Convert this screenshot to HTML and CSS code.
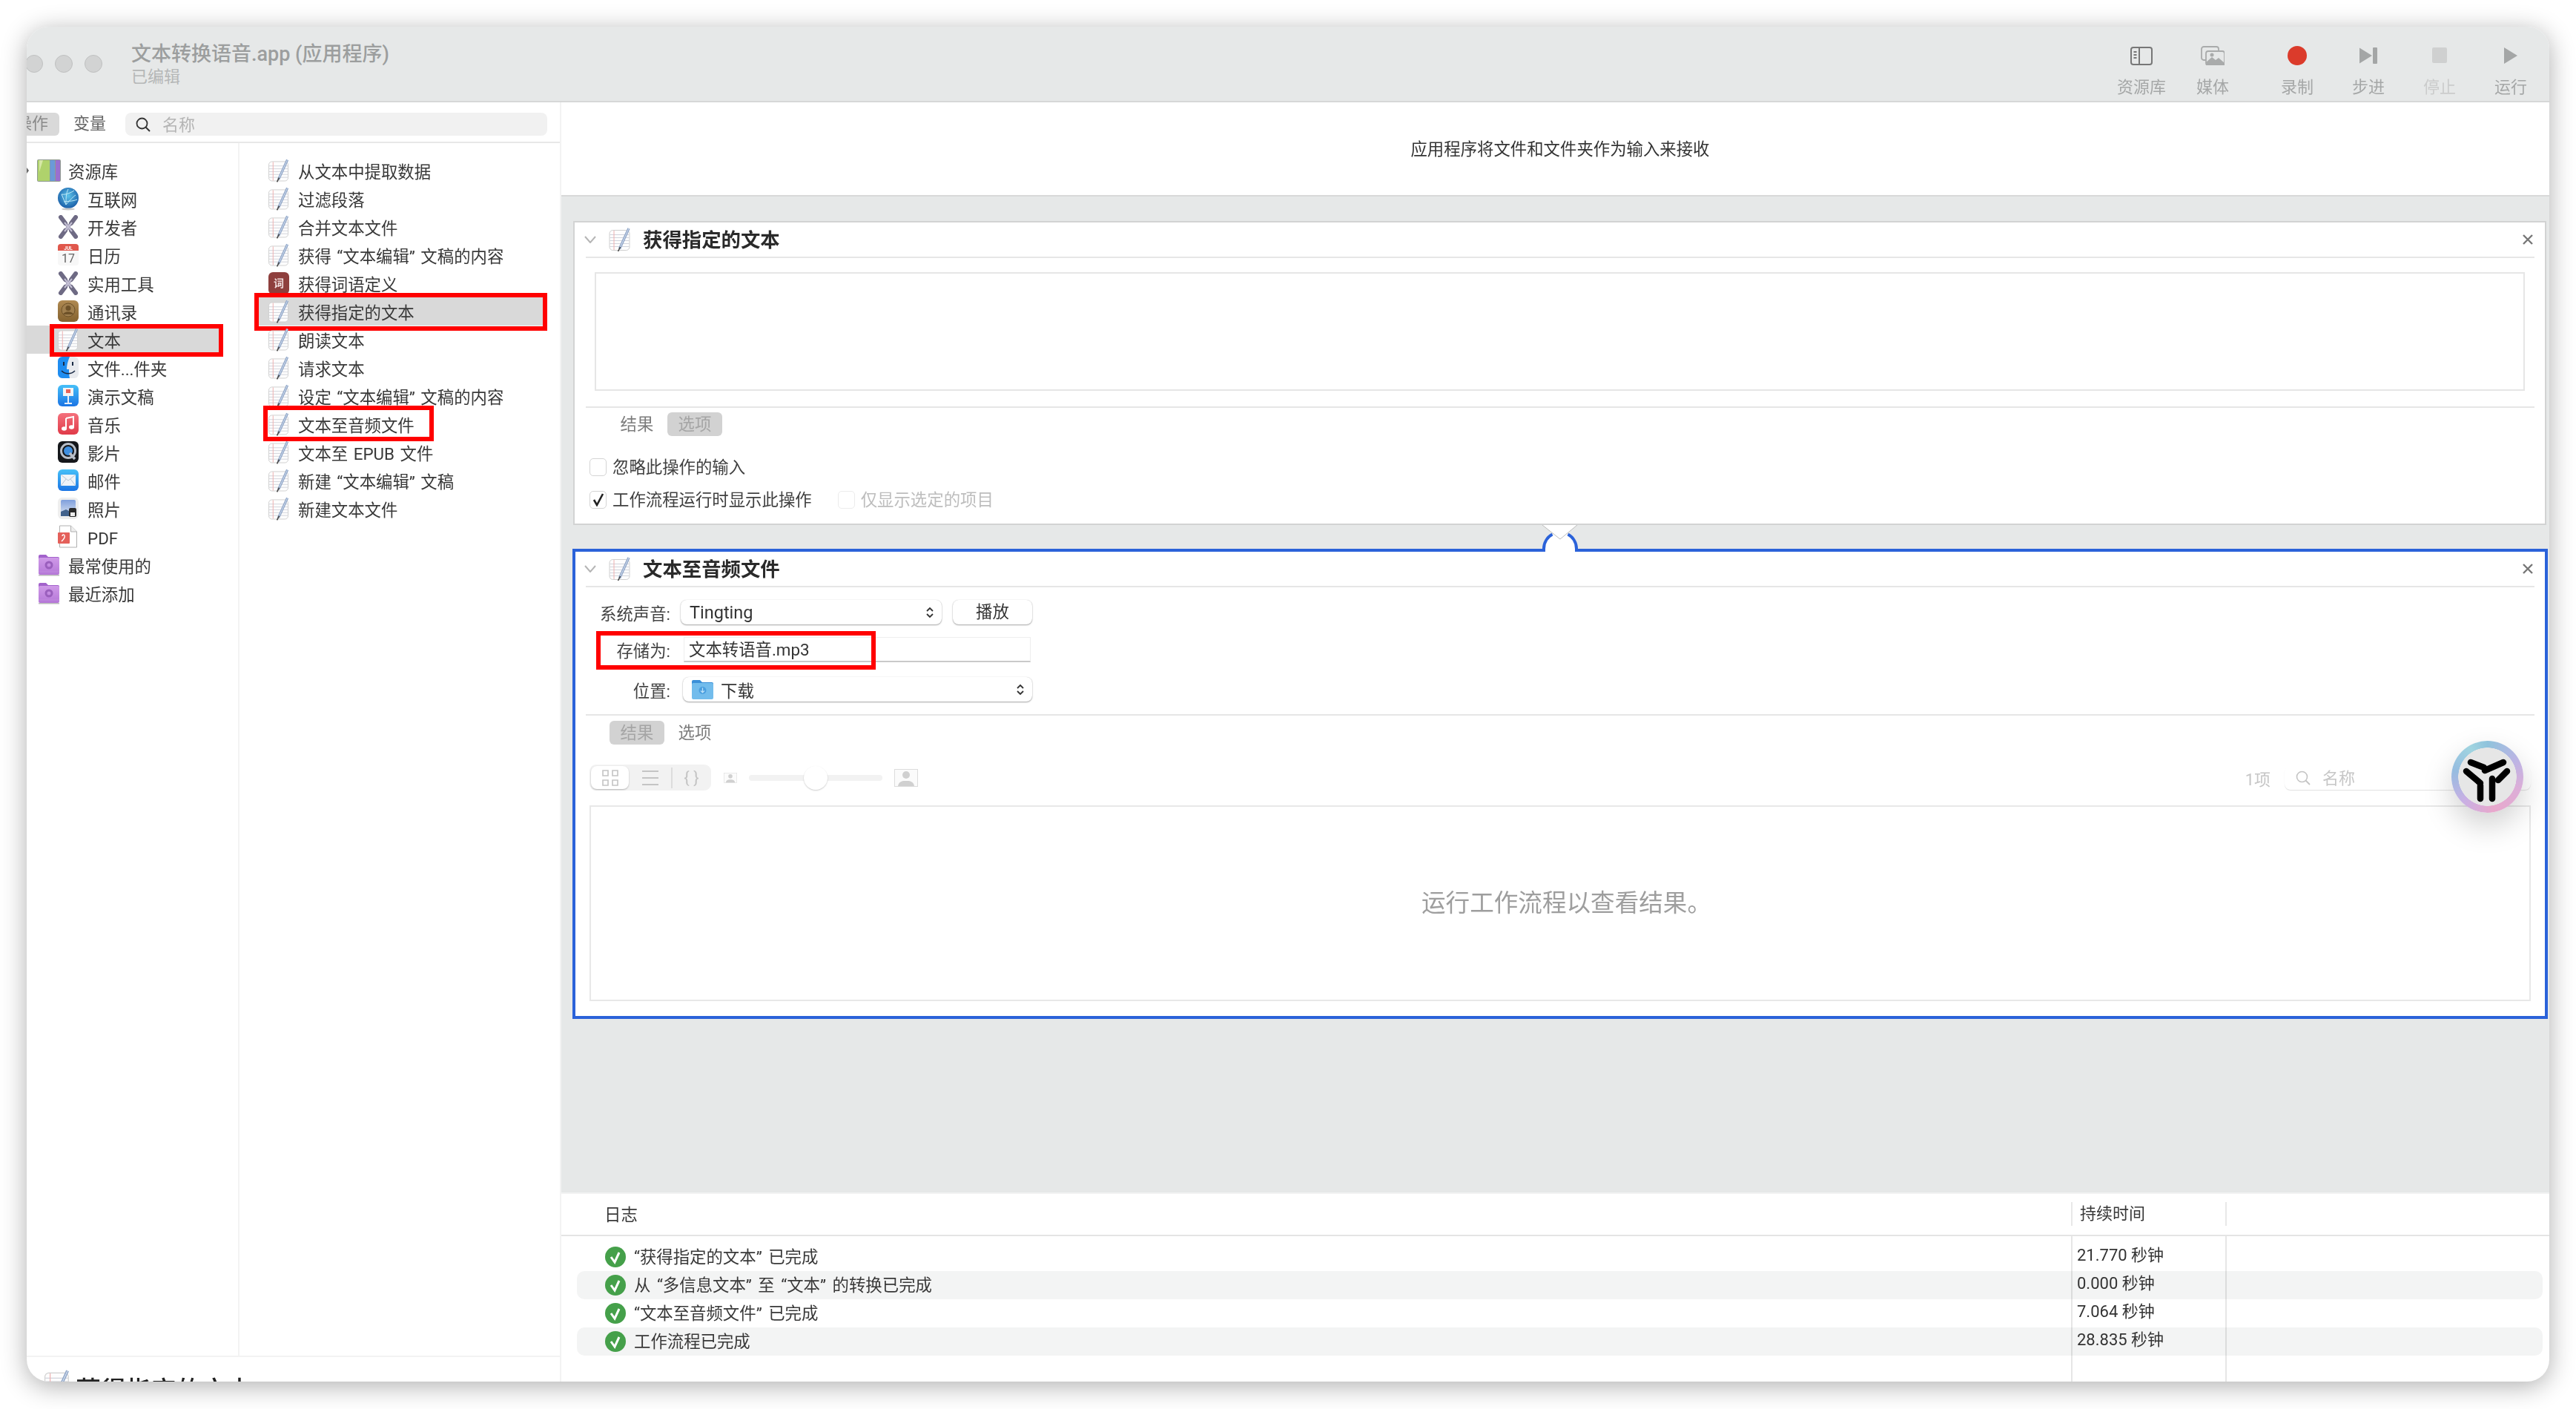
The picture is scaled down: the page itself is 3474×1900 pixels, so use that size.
FILE: index.html
```html
<!DOCTYPE html>
<html lang="zh-CN">
<head>
  <meta charset="UTF-8" />
  <title>文本转换语音.app</title>
  <link rel="stylesheet" href="styles.css">
</head>
<body>
  <svg class="defs" xmlns="http://www.w3.org/2000/svg">
    <defs>
      <radialGradient id="globeFill" cx="50%" cy="40%" r="60%"><stop offset="0" stop-color="#5cc3ea"/><stop offset="1" stop-color="#1a5ea8"/></radialGradient>
      <linearGradient id="redFill" x1="0" y1="0" x2="0" y2="1"><stop offset="0" stop-color="#f4707c"/><stop offset="1" stop-color="#e03a48"/></linearGradient>
      <linearGradient id="blueFill" x1="0" y1="0" x2="0" y2="1"><stop offset="0" stop-color="#46c0f8"/><stop offset="1" stop-color="#1b74e4"/></linearGradient>
      <linearGradient id="purpleFill" x1="0" y1="0" x2="0" y2="1"><stop offset="0" stop-color="#cf9ae8"/><stop offset="1" stop-color="#b577d8"/></linearGradient>
      <linearGradient id="photoFill" x1="0" y1="0" x2="0" y2="1"><stop offset="0" stop-color="#7f9fdc"/><stop offset="1" stop-color="#dfe7f2"/></linearGradient>
      <linearGradient id="brownFill" x1="0" y1="0" x2="0" y2="1"><stop offset="0" stop-color="#b08a52"/><stop offset="1" stop-color="#84622f"/></linearGradient>
      <symbol id="i-note" viewBox="0 0 29 32">
        <rect x="0.5" y="3.5" width="27" height="27" rx="4.5" fill="#fdfdfd" stroke="#cfcfcf"/>
        <path d="M1 9.5h26M1 13.5h26M1 17.5h26M1 21.5h26M1 25.5h26" stroke="#d2d4dc" stroke-width="1"/>
        <path d="M6.5 4v26" stroke="#eeb0b0" stroke-width="1"/>
        <path d="M26.5 1L14 28.5" stroke="#8ea4c6" stroke-width="3.4"/>
        <path d="M26.5 1L14 28.5" stroke="#d6e2f2" stroke-width="1"/>
        <path d="M15 26l-3 6" stroke="#444" stroke-width="1.6"/>
      </symbol>
      <symbol id="i-books" viewBox="0 0 32 32">
        <rect x="0" y="1" width="32" height="30" rx="2" fill="#8f9a8f"/>
        <rect x="1" y="2" width="16" height="28" fill="#afd26c"/>
        <rect x="17.500" y="2" width="6.500" height="28" fill="#6b9ad8"/>
        <rect x="25" y="2" width="6" height="28" fill="#9a6fd0"/>
        <path d="M3 2h5L3 18z" fill="#d6e8a6"/>
      </symbol>
      <symbol id="i-globe" viewBox="0 0 28 32">
        <circle cx="14" cy="15" r="14" fill="url(#globeFill)"/>
        <path d="M5 10c6 1 12-2 17-5M5 10l6 14M11 24c5-6 10-11 13-13M14 3c-3 6-3 12-3 21M8 20c5-1 11 0 18-3" stroke="#bfeaf8" stroke-width="1" fill="none"/>
        <ellipse cx="14" cy="30" rx="9" ry="1.500" fill="#c8c8c8"/>
      </symbol>
      <symbol id="i-tools" viewBox="0 0 28 32">
        <path d="M4 3l20 26M24 3L4 29" stroke="#9c98b4" stroke-width="4"/>
        <path d="M4 3l6 8M24 3l-6 8M4 29l6-8M24 29l-6-8" stroke="#6e6a84" stroke-width="6" stroke-linecap="round"/>
        <path d="M9 10l10 12M19 10L9 22" stroke="#c4c0d4" stroke-width="2"/>
      </symbol>
      <symbol id="i-cal" viewBox="0 0 28 32">
        <rect x="0" y="1" width="28" height="29" rx="4" fill="#f7f7f7"/>
        <path d="M0 10V5a4 4 0 0 1 4-4h20a4 4 0 0 1 4 4v5z" fill="#e0574c"/>
        <text x="14" y="8.500" text-anchor="middle" font-family="Roboto" font-size="6.500" font-weight="700" fill="#fff">JUL</text>
        <text x="14" y="26" text-anchor="middle" font-family="Roboto" font-size="16" fill="#666">17</text>
      </symbol>
      <symbol id="i-contacts" viewBox="0 0 28 32">
        <rect x="0" y="1" width="28" height="29" rx="6" fill="url(#brownFill)"/>
        <circle cx="14" cy="14" r="9" fill="#a07f4e" stroke="#6d5128"/>
        <circle cx="14" cy="11.500" r="3.500" fill="#6d5128"/>
        <path d="M7 20c2-5 12-5 14 0z" fill="#6d5128"/>
      </symbol>
      <symbol id="i-finder" viewBox="0 0 28 32">
        <rect x="0" y="1" width="28" height="29" rx="6" fill="#e8eaee"/>
        <path d="M6 1h10c-3 7-4 12-4 17h3c0 4 0 8 1 12H6a6 6 0 0 1-6-6V7a6 6 0 0 1 6-6z" fill="#1f8df0"/>
        <path d="M8 8v5M20 8v5" stroke="#1a2a44" stroke-width="2"/>
        <path d="M5 20c5 5 13 5 18 0" stroke="#1a2a44" stroke-width="1.600" fill="none"/>
      </symbol>
      <symbol id="i-keynote" viewBox="0 0 28 32">
        <rect x="0" y="1" width="28" height="29" rx="6" fill="url(#blueFill)"/>
        <rect x="7" y="5" width="14" height="11" fill="#f4f4f4"/>
        <rect x="11" y="7" width="6" height="5" fill="#e8635a"/>
        <path d="M14 16v10M9 26h10" stroke="#e8eef8" stroke-width="2"/>
      </symbol>
      <symbol id="i-music" viewBox="0 0 28 32">
        <rect x="0" y="1" width="28" height="29" rx="6" fill="url(#redFill)"/>
        <path d="M11 8l10-2v14M11 8v14" stroke="#fff" stroke-width="2" fill="none"/>
        <ellipse cx="8.500" cy="22" rx="3.500" ry="2.800" fill="#fff"/>
        <ellipse cx="18.500" cy="20" rx="3.500" ry="2.800" fill="#fff"/>
      </symbol>
      <symbol id="i-quick" viewBox="0 0 28 32">
        <rect x="0" y="1" width="28" height="29" rx="6" fill="#15171b"/>
        <circle cx="14" cy="14" r="9.500" fill="none" stroke="#b8bec8" stroke-width="3"/>
        <circle cx="14" cy="14" r="6" fill="#3f8fe0"/>
        <path d="M16 17l7 8" stroke="#b8bec8" stroke-width="3.500"/>
      </symbol>
      <symbol id="i-mail" viewBox="0 0 28 32">
        <rect x="0" y="1" width="28" height="29" rx="6" fill="url(#blueFill)"/>
        <rect x="4" y="8" width="20" height="15" fill="#eef3f8"/>
        <path d="M4 8l10 8 10-8M4 23l7-9M24 23l-7-9" stroke="#b5c4d4" fill="none"/>
      </symbol>
      <symbol id="i-photos" viewBox="0 0 28 32">
        <rect x="0" y="1" width="28" height="29" rx="6" fill="#eeeeee"/>
        <rect x="4" y="4" width="20" height="22" rx="2" fill="url(#photoFill)"/>
        <path d="M4 20l7-3 6 3v6H4z" fill="#41628c"/>
        <rect x="15" y="15" width="10" height="12" rx="2" fill="#2a2a2a"/>
        <rect x="17" y="21" width="6" height="5" fill="#eee"/>
      </symbol>
      <symbol id="i-pdf" viewBox="0 0 28 32">
        <path d="M2.500 1h15l8 8v21h-23z" fill="#fff" stroke="#b0b0b0"/>
        <path d="M17.500 1v8h8" fill="#eee" stroke="#b0b0b0"/>
        <rect x="0" y="10" width="16" height="15" rx="1" fill="#e4605a"/>
        <path d="M5 22c3-3 5-6 4-8s-3-1-3 1" stroke="#fff" stroke-width="1.400" fill="none"/>
      </symbol>
      <symbol id="i-folder" viewBox="0 0 28 32">
        <path d="M0 4a2 2 0 0 1 2-2h8l3 3h13a2 2 0 0 1 2 2v4H0z" fill="#a262cb"/>
        <rect x="0" y="6" width="28" height="23" rx="2" fill="url(#purpleFill)"/>
        <rect x="0" y="29" width="28" height="1.500" fill="#b9b9b9"/>
        <circle cx="14" cy="16" r="4" fill="none" stroke="#9a5fbd" stroke-width="3"/>
        <path d="M0 25h28" stroke="#c08ddc"/>
      </symbol>
      <symbol id="i-check" viewBox="0 0 28 28">
        <circle cx="14" cy="14" r="14" fill="#45a04a"/>
        <path d="M8 14l5 7 6-13" fill="none" stroke="#fff" stroke-width="3"/>
      </symbol>
      <symbol id="i-user" viewBox="0 0 32 24">
        <rect x="0.500" y="0.500" width="31" height="23" fill="#fbfbfb" stroke="#dcdcdc"/>
        <circle cx="16" cy="8" r="5" fill="#d0d0d0"/>
        <path d="M5 23c1-7 7-7 11-7s10 0 11 7z" fill="#d0d0d0"/>
      </symbol>
    </defs>
  </svg>

  <div class="window">
    <header class="titlebar">
      <div class="lights"><i></i><i></i><i></i></div>
      <div class="doc-title">
        <div class="doc-name">文本转换语音.app (应用程序)</div>
        <div class="doc-state">已编辑</div>
      </div>
      <div class="tools">
        <div class="tool">
          <svg width="30" height="26" viewBox="0 0 30 26"><rect x="1" y="2" width="28" height="23" rx="3" fill="none" stroke="#777" stroke-width="2"/><path d="M12 2v23" stroke="#777" stroke-width="2"/><path d="M4.500 8h4M4.500 12h4M4.500 16h4" stroke="#777" stroke-width="1.800"/></svg>
          <span>资源库</span>
        </div>
        <div class="tool">
          <svg width="32" height="26" viewBox="0 0 32 26"><rect x="1" y="1" width="23" height="18" rx="3" fill="none" stroke="#a9abab" stroke-width="1.800"/><rect x="7" y="7" width="25" height="19" rx="3" fill="#e6e8e8" stroke="#a9abab" stroke-width="1.800"/><path d="M7 26v-4l8-7 5 4 4-3 8 7v3z" fill="#a9abab"/><circle cx="15" cy="12" r="2.500" fill="#a9abab"/></svg>
          <span>媒体</span>
        </div>
        <div class="tool tool-record">
          <svg width="26" height="26" viewBox="0 0 26 26"><circle cx="13" cy="13" r="13" fill="#db3b2b"/></svg>
          <span>录制</span>
        </div>
        <div class="tool">
          <svg width="24" height="26" viewBox="0 0 24 26"><path d="M0 2.500L17 13 0 23.500z" fill="#a4a6a6"/><rect x="18" y="2" width="6" height="22" rx="1" fill="#a4a6a6"/></svg>
          <span>步进</span>
        </div>
        <div class="tool tool-off">
          <svg width="20" height="26" viewBox="0 0 20 26"><rect x="0" y="2" width="20" height="21" rx="2" fill="#cfd0d0"/></svg>
          <span>停止</span>
        </div>
        <div class="tool">
          <svg width="20" height="26" viewBox="0 0 20 26"><path d="M1 2l18 11L1 24z" fill="#a4a6a6"/></svg>
          <span>运行</span>
        </div>
      </div>
    </header>

    <div class="main">
      <aside class="library">
        <div class="lib-tabs">
          <div class="lib-tab lib-tab-on">操作</div>
          <div class="lib-tab">变量</div>
          <div class="search lib-search">
            <svg width="20" height="20" viewBox="0 0 20 20"><circle cx="8.500" cy="8.500" r="7" fill="none" stroke="#333" stroke-width="1.800"/><path d="M13.500 13.500L19 19" stroke="#333" stroke-width="2"/></svg>
            <span>名称</span>
          </div>
        </div>

        <div class="lib-columns">
          <div class="cats">
            <div class="row top"><svg class="ico-wide"><use href="#i-books"/></svg><span>资源库</span></div>
            <div class="row"><svg class="ico"><use href="#i-globe"/></svg><span>互联网</span></div>
            <div class="row"><svg class="ico"><use href="#i-tools"/></svg><span>开发者</span></div>
            <div class="row"><svg class="ico"><use href="#i-cal"/></svg><span>日历</span></div>
            <div class="row"><svg class="ico"><use href="#i-tools"/></svg><span>实用工具</span></div>
            <div class="row"><svg class="ico"><use href="#i-contacts"/></svg><span>通讯录</span></div>
            <div class="row on mark-cat"><svg class="ico"><use href="#i-note"/></svg><span>文本</span></div>
            <div class="row"><svg class="ico"><use href="#i-finder"/></svg><span>文件...件夹</span></div>
            <div class="row"><svg class="ico"><use href="#i-keynote"/></svg><span>演示文稿</span></div>
            <div class="row"><svg class="ico"><use href="#i-music"/></svg><span>音乐</span></div>
            <div class="row"><svg class="ico"><use href="#i-quick"/></svg><span>影片</span></div>
            <div class="row"><svg class="ico"><use href="#i-mail"/></svg><span>邮件</span></div>
            <div class="row"><svg class="ico"><use href="#i-photos"/></svg><span>照片</span></div>
            <div class="row"><svg class="ico"><use href="#i-pdf"/></svg><span>PDF</span></div>
            <div class="row top"><svg class="ico-wide"><use href="#i-folder"/></svg><span>最常使用的</span></div>
            <div class="row top"><svg class="ico-wide"><use href="#i-folder"/></svg><span>最近添加</span></div>
          </div>
          <div class="actions">
            <div class="row"><svg class="ico"><use href="#i-note"/></svg><span>从文本中提取数据</span></div>
            <div class="row"><svg class="ico"><use href="#i-note"/></svg><span>过滤段落</span></div>
            <div class="row"><svg class="ico"><use href="#i-note"/></svg><span>合并文本文件</span></div>
            <div class="row"><svg class="ico"><use href="#i-note"/></svg><span>获得 “文本编辑” 文稿的内容</span></div>
            <div class="row"><div class="ico dict">词</div><span>获得词语定义</span></div>
            <div class="row on mark-action"><svg class="ico"><use href="#i-note"/></svg><span>获得指定的文本</span></div>
            <div class="row"><svg class="ico"><use href="#i-note"/></svg><span>朗读文本</span></div>
            <div class="row"><svg class="ico"><use href="#i-note"/></svg><span>请求文本</span></div>
            <div class="row"><svg class="ico"><use href="#i-note"/></svg><span>设定 “文本编辑” 文稿的内容</span></div>
            <div class="row mark-audio"><svg class="ico"><use href="#i-note"/></svg><span>文本至音频文件</span></div>
            <div class="row"><svg class="ico"><use href="#i-note"/></svg><span>文本至 EPUB 文件</span></div>
            <div class="row"><svg class="ico"><use href="#i-note"/></svg><span>新建 “文本编辑” 文稿</span></div>
            <div class="row"><svg class="ico"><use href="#i-note"/></svg><span>新建文本文件</span></div>
          </div>
        </div>

        <div class="lib-desc">
          <svg class="desc-ico"><use href="#i-note"/></svg>
          <span>获得指定的文本</span>
        </div>
      </aside>

      <section class="workspace">
        <div class="input-note">应用程序将文件和文件夹作为输入来接收</div>

        <div class="flow">
          <div class="card">
            <div class="card-head">
              <svg class="chevron" width="16" height="10" viewBox="0 0 16 10"><path d="M1 1l7 8 7-8" fill="none" stroke="#b5b5b5" stroke-width="2"/></svg>
              <svg class="head-ico"><use href="#i-note"/></svg>
              <div class="card-title">获得指定的文本</div>
              <svg class="close" width="14" height="14" viewBox="0 0 14 14"><path d="M1 1l12 12M13 1L1 13" stroke="#777" stroke-width="2.400"/></svg>
            </div>
            <div class="text-box"></div>
            <div class="card-tabs">
              <div class="card-tab">结果</div>
              <div class="card-tab card-tab-on">选项</div>
            </div>
            <label class="opt opt-first"><i class="box"></i><span>忽略此操作的输入</span></label>
            <div class="opt-row">
              <label class="opt"><i class="box box-on"><svg width="16" height="18" viewBox="0 0 16 18"><path d="M2 9l4 7 8-15" fill="none" stroke="#222" stroke-width="2.600"/></svg></i><span>工作流程运行时显示此操作</span></label>
              <label class="opt opt-off"><i class="box"></i><span>仅显示选定的项目</span></label>
            </div>
          </div>

          <div class="card card-active">
            <svg class="notch" width="48" height="36" viewBox="0 0 48 36">
              <circle cx="24" cy="32" r="22" fill="#fff"/>
              <rect x="4" y="30" width="40" height="6" fill="#fff"/>
              <path d="M0 0L24 19 47 0z" fill="#fff"/>
              <path d="M0 0L24 19 47 0" fill="none" stroke="#bcbcbc" stroke-width="1"/>
              <path d="M2 36V32A22 22 0 0 1 13.500 12.600M34.500 12.600A22 22 0 0 1 46 32V36" fill="none" stroke="#2b62d9" stroke-width="4"/>
            </svg>
            <div class="card-head">
              <svg class="chevron" width="16" height="10" viewBox="0 0 16 10"><path d="M1 1l7 8 7-8" fill="none" stroke="#b5b5b5" stroke-width="2"/></svg>
              <svg class="head-ico"><use href="#i-note"/></svg>
              <div class="card-title">文本至音频文件</div>
              <svg class="close" width="14" height="14" viewBox="0 0 14 14"><path d="M1 1l12 12M13 1L1 13" stroke="#777" stroke-width="2.400"/></svg>
            </div>

            <div class="form">
              <div class="form-row">
                <div class="form-label">系统声音:</div>
                <div class="select voice">Tingting
                  <svg class="updown" width="10" height="16" viewBox="0 0 10 16"><path d="M1 6l4-4 4 4M1 10l4 4 4-4" fill="none" stroke="#333" stroke-width="1.800"/></svg>
                </div>
                <div class="btn">播放</div>
              </div>
              <div class="form-row form-save">
                <div class="form-label">存储为:</div>
                <div class="field">文本转语音.mp3</div>
              </div>
              <div class="form-row form-place">
                <div class="form-label">位置:</div>
                <div class="select place">
                  <svg width="29" height="28" viewBox="0 0 29 28"><path d="M0 3a2 2 0 0 1 2-2h9l3 3h13a2 2 0 0 1 2 2v4H0z" fill="#3a8fd8"/><rect x="0" y="5" width="29" height="22" rx="2" fill="#72bcec"/><circle cx="14.500" cy="15" r="5" fill="#4a9fdf"/><path d="M14.500 11.500v6M12 15.500l2.500 2.500 2.500-2.500" fill="none" stroke="#bfe2f8" stroke-width="1.200"/></svg>
                  <span>下载</span>
                  <svg class="updown" width="10" height="16" viewBox="0 0 10 16"><path d="M1 6l4-4 4 4M1 10l4 4 4-4" fill="none" stroke="#333" stroke-width="1.800"/></svg>
                </div>
              </div>
            </div>

            <div class="card-tabs card-tabs-result">
              <div class="card-tab card-tab-on">结果</div>
              <div class="card-tab">选项</div>
            </div>

            <div class="result-bar">
              <div class="segments">
                <div class="seg seg-on"><svg width="24" height="24" viewBox="0 0 24 24"><path d="M2 2h7v7H2zM15 2h7v7h-7zM2 15h7v7H2zM15 15h7v7h-7z" fill="none" stroke="#c4c4c4" stroke-width="1.600"/></svg></div>
                <div class="seg seg-list"><svg width="24" height="24" viewBox="0 0 24 24"><path d="M1 3h22M1 12h22M1 21h22" stroke="#c4c4c4" stroke-width="2"/></svg></div>
                <i class="seg-line"></i>
                <div class="seg seg-code">{ }</div>
              </div>
              <svg class="user-small"><use href="#i-user"/></svg>
              <div class="slider"><i></i></div>
              <svg class="user-big"><use href="#i-user"/></svg>
              <div class="count">1项</div>
              <div class="search result-search">
                <svg width="20" height="20" viewBox="0 0 20 20"><circle cx="8.500" cy="8.500" r="7" fill="none" stroke="#c4c4c4" stroke-width="1.600"/><path d="M13.500 13.500L19 19" stroke="#c4c4c4" stroke-width="1.800"/></svg>
                <span>名称</span>
              </div>
            </div>

            <div class="result-box">运行工作流程以查看结果。</div>

            <div class="badge">
              <svg width="75" height="75" viewBox="11 11 75 75"><path d="M26 29l18 7M45 40l25-11M20 41l19 16M63 53l12-12M39 60v18M55 51v27" fill="none" stroke="#000" stroke-width="8.500" stroke-linecap="round"/></svg>
            </div>
          </div>
        </div>

        <div class="log">
          <div class="log-head">
            <div class="log-name">日志</div>
            <div class="log-time">持续时间</div>
            <div class="log-rest"></div>
          </div>
          <div class="log-body">
            <div class="log-row"><div class="log-msg"><svg width="28" height="28"><use href="#i-check"/></svg><span>“获得指定的文本” 已完成</span></div><div class="log-dur">21.770 秒钟</div></div>
            <div class="log-row"><div class="log-msg"><svg width="28" height="28"><use href="#i-check"/></svg><span>从 “多信息文本” 至 “文本” 的转换已完成</span></div><div class="log-dur">0.000 秒钟</div></div>
            <div class="log-row"><div class="log-msg"><svg width="28" height="28"><use href="#i-check"/></svg><span>“文本至音频文件” 已完成</span></div><div class="log-dur">7.064 秒钟</div></div>
            <div class="log-row"><div class="log-msg"><svg width="28" height="28"><use href="#i-check"/></svg><span>工作流程已完成</span></div><div class="log-dur">28.835 秒钟</div></div>
          </div>
        </div>
      </section>
    </div>
  </div>
</body>
</html>
```

FILE: styles.css
```css
*, *::before, *::after {
  box-sizing: border-box;
}
html, body {
  margin: 0;
  height: 100%;
}
body {
  background: #fff;
  font-family: Roboto, "Noto Sans CJK SC", sans-serif;
  font-size: 22.4px;
  color: #383838;
  overflow: hidden;
  padding: 36px 36px 37px 36px;
}
.defs {
  display: block;
  width: 0;
  height: 0;
}
.window {
  display: flex;
  flex-direction: column;
  height: 100%;
  background: #fff;
  border-radius: 30px;
  overflow: hidden;
  box-shadow: 0 6px 34px rgba(0, 0, 0, 0.32);
  filter: blur(0.4px);
}

/* title bar */
.titlebar {
  display: flex;
  flex: none;
  height: 102px;
  background: #e6e8e8;
  border-bottom: 2px solid #d6d7d7;
}
.lights {
  display: flex;
  gap: 16px;
  margin: 38px 39px 0 -2px;
}
.lights i {
  width: 24px;
  height: 24px;
  border-radius: 50%;
  background: #d2d3d3;
  border: 1px solid #bfc0c0;
}
.doc-title {
  margin-top: 22px;
}
.doc-name {
  font-size: 27px;
  line-height: 30px;
  font-weight: 500;
  color: #9c9e9e;
}
.doc-state {
  margin-top: 2px;
  line-height: 28px;
  font-size: 22px;
  color: #b5b7b7;
}
.tools {
  display: flex;
  margin-left: auto;
  padding-right: 4px;
}
.tool {
  width: 96px;
  padding-top: 26px;
  display: flex;
  flex-direction: column;
  align-items: center;
  font-size: 22px;
  color: #a5a7a7;
}
.tool svg {
  height: 26px;
  flex: none;
}
.tool span {
  line-height: 30px;
  margin-top: 15px;
}
.tool-record {
  margin-left: 18px;
}
.tool-off {
  color: #cbcccc;
}

/* library */
.main {
  display: flex;
  flex: 1;
  min-height: 0;
}
.library {
  display: flex;
  flex-direction: column;
  flex: none;
  width: 721px;
  border-right: 2px solid #f3f3f3;
}
.lib-tabs {
  display: flex;
  flex: none;
  height: 55px;
  padding-top: 14px;
  margin-left: -30px;
  gap: 4px;
  border-bottom: 2px solid #e8e8e8;
}
.lib-tab {
  width: 74px;
  height: 31px;
  line-height: 29px;
  text-align: center;
  border-radius: 6px;
  font-size: 22px;
  color: #666;
}
.lib-tab-on {
  background: #d9d9d9;
  color: #8a8a8a;
}
.search {
  display: flex;
  align-items: center;
  border-radius: 8px;
  font-size: 22px;
}
.search span {
  margin: 0 0 3px 16px;
}
.lib-search {
  width: 569px;
  height: 31px;
  margin-left: 7px;
  padding-left: 14px;
  background: #f1f1f1;
  color: #b4b4b4;
}
.lib-columns {
  display: flex;
  flex: 1;
  min-height: 0;
}
.cats {
  flex: none;
  width: 287px;
  padding-top: 18px;
  border-right: 2px solid #f3f3f3;
}
.actions {
  flex: 1;
  padding: 18px 23px 0 25px;
  word-spacing: 2px;
}
.row {
  position: relative;
  display: flex;
  align-items: center;
  height: 38px;
  line-height: 38px;
  gap: 12px;
}
.row span {
  margin-top: 4px;
}
.cats .row {
  padding-left: 42px;
}
.cats .row.top {
  padding-left: 14px;
  gap: 10px;
}
.cats .row:first-child::before {
  content: "";
  position: absolute;
  left: 0;
  top: 15px;
  border-left: 3px solid #666;
  border-top: 4px solid transparent;
  border-bottom: 4px solid transparent;
}
.actions .row {
  padding-left: 14px;
}
.row.on {
  background: #d9d9d9;
}
.ico {
  flex: none;
  width: 28px;
  height: 32px;
}
.ico-wide {
  flex: none;
  width: 32px;
  height: 32px;
}
.dict {
  height: 30px;
  border-radius: 6px;
  background: #8e3f3d;
  color: #f0dcdc;
  font-size: 14px;
  line-height: 30px;
  font-weight: 700;
  text-align: center;
}
.mark-cat::after,
.mark-action::after,
.mark-audio::after,
.form-save::after {
  content: "";
  position: absolute;
  border: 6px solid #f00;
}
.cats .mark-cat {
  margin-right: 24px;
}
.mark-cat::after {
  left: 31px;
  right: -4px;
  top: -2px;
  bottom: -4px;
}
.mark-action::after {
  left: -5px;
  right: -6px;
  top: -6px;
  bottom: -7px;
}
.mark-audio::after {
  left: 7px;
  width: 230px;
  top: -6px;
  bottom: -4px;
}
.lib-desc {
  display: flex;
  flex: none;
  height: 35px;
  gap: 8px;
  padding: 6px 0 0 24px;
  border-top: 2px solid #f3f3f3;
  overflow: hidden;
  font-size: 34px;
  line-height: 78px;
  font-weight: 500;
  color: #222;
}
.desc-ico {
  flex: none;
  width: 34px;
  height: 38px;
  margin-top: 11px;
}

/* workspace */
.workspace {
  display: flex;
  flex-direction: column;
  flex: 1;
  min-width: 0;
}
.input-note {
  flex: none;
  height: 127px;
  line-height: 126px;
  padding-left: 13px;
  text-align: center;
  color: #333;
  border-bottom: 2px solid #d8d9d9;
}
.flow {
  flex: 1;
  min-height: 0;
  padding: 33px 4px 0 16px;
  background: #e6e8e8;
}
.card {
  position: relative;
  display: flex;
  flex-direction: column;
  height: 410px;
  padding: 0 14px 0 15px;
  background: #fff;
  border: 2px solid #d2d3d3;
}
.card-active {
  height: 634px;
  margin: 32px -2px 0 -1px;
  padding: 0 14px;
  border: 4px solid #2b62d9;
}
.card-head {
  display: flex;
  flex: none;
  align-items: center;
  height: 48px;
  border-bottom: 2px solid #e6e6e6;
}
.chevron {
  flex: none;
  margin-left: -2px;
}
.head-ico {
  flex: none;
  width: 30px;
  height: 32px;
  margin-left: 17px;
}
.card-title {
  margin: 0 0 4px 16px;
  font-size: 26.400px;
  font-weight: 700;
  color: #2a2a2a;
}
.close {
  margin-left: auto;
  margin-right: 2px;
}
.text-box {
  flex: none;
  height: 160px;
  margin: 19px 13px 21px 12px;
  border: 2px solid #e6e6e6;
}
.card-tabs {
  display: flex;
  flex: none;
  gap: 4px;
  height: 40px;
  padding: 6px 0 0 32px;
  border-top: 2px solid #e6e6e6;
}
.card-tabs-result {
  height: 41px;
  margin-top: 17px;
  padding-top: 7px;
}
.card-tab {
  width: 74px;
  height: 32px;
  line-height: 32px;
  text-align: center;
  border-radius: 6px;
  color: #7c7c7c;
}
.card-tab-on {
  background: #d2d2d2;
  color: #a5a5a5;
}
.opt {
  display: flex;
  align-items: center;
  gap: 8px;
  height: 24px;
  margin-left: 5px;
  color: #404040;
}
.opt span {
  margin-bottom: 4px;
}
.opt-first {
  margin-top: 30px;
}
.opt-row {
  display: flex;
  margin-top: 20px;
}
.opt-off {
  margin-left: 35px;
  color: #bdbdbd;
}
.box {
  display: flex;
  align-items: center;
  justify-content: center;
  flex: none;
  width: 23px;
  height: 24px;
  border: 1px solid #d4d4d4;
  border-radius: 5px;
  background: #fff;
}
.opt-off .box {
  border-color: #ececec;
}

/* text to audio form */
.form {
  flex: none;
  margin-top: 17px;
}
.form-row {
  position: relative;
  display: flex;
  align-items: center;
  height: 33px;
}
.form-save {
  height: 34px;
  margin-top: 17px;
}
.form-save::after {
  left: 14px;
  width: 377px;
  top: -8px;
  height: 52px;
}
.form-place {
  margin-top: 20px;
}
.form-label {
  flex: none;
  width: 114px;
  text-align: right;
  color: #444;
}
.select {
  display: flex;
  align-items: center;
  height: 33px;
  padding-left: 12px;
  background: #fff;
  border-radius: 8px;
  box-shadow: 0 1px 2px rgba(0, 0, 0, 0.35), 0 0 1px rgba(0, 0, 0, 0.2);
  color: #333;
}
.voice {
  width: 352px;
  margin-left: 14px;
  font-size: 23.500px;
}
.place {
  width: 471px;
  margin-left: 17px;
}
.place span {
  margin-left: 10px;
}
.updown {
  margin-left: auto;
  margin-right: 11px;
}
.btn {
  width: 107px;
  height: 33px;
  margin-left: 15px;
  line-height: 33px;
  text-align: center;
  background: #fff;
  border-radius: 8px;
  box-shadow: 0 1px 2px rgba(0, 0, 0, 0.35), 0 0 1px rgba(0, 0, 0, 0.2);
  color: #333;
}
.field {
  width: 468px;
  height: 34px;
  margin-left: 18px;
  padding-left: 6px;
  line-height: 32px;
  border: 1px solid #eee;
  border-bottom: 2px solid #c9c9c9;
  color: #333;
}

/* result area */
.result-bar {
  display: flex;
  flex: none;
  align-items: center;
  height: 35px;
  margin: 27px 5px 0 5px;
}
.segments {
  display: flex;
  align-items: center;
  width: 164px;
  height: 35px;
  padding: 2px;
  background: #f2f2f2;
  border-radius: 9px;
}
.seg {
  display: flex;
  flex: none;
  align-items: center;
  justify-content: center;
  width: 51px;
  height: 31px;
}
.seg-on {
  background: #fff;
  border-radius: 8px;
  box-shadow: 0 1px 2px rgba(0, 0, 0, 0.25);
}
.seg-list {
  width: 57px;
}
.seg-line {
  flex: none;
  width: 2px;
  height: 28px;
  background: #dcdcdc;
}
.seg-code {
  font-size: 22px;
  line-height: 28px;
  color: #c4c4c4;
}
.user-small {
  flex: none;
  width: 18px;
  height: 14px;
  margin-left: 17px;
}
.slider {
  position: relative;
  flex: none;
  width: 180px;
  height: 8px;
  margin-left: 16px;
  background: #f2f2f2;
  border-radius: 4px;
}
.slider i {
  position: absolute;
  left: 74px;
  top: -12px;
  width: 32px;
  height: 32px;
  background: #fff;
  border-radius: 50%;
  box-shadow: 0 1px 2px rgba(0, 0, 0, 0.2);
}
.user-big {
  flex: none;
  width: 32px;
  height: 24px;
  margin-left: 16px;
}
.count {
  margin-left: auto;
  font-size: 22px;
  color: #c6c6c6;
}
.result-search {
  width: 332px;
  height: 32px;
  margin-left: 19px;
  padding-left: 15px;
  color: #c6c6c6;
  box-shadow: 0 1px 1px rgba(0, 0, 0, 0.12);
}
.result-box {
  flex: none;
  height: 264px;
  margin: 20px 5px 0 5px;
  padding-left: 17px;
  line-height: 260px;
  text-align: center;
  font-size: 32.600px;
  color: #9e9e9e;
  border: 2px solid #e8e8e8;
}
.notch {
  position: absolute;
  left: 50%;
  top: -36px;
  transform: translateX(-50%);
}
.badge {
  position: absolute;
  right: 29px;
  top: 255px;
  display: flex;
  align-items: center;
  justify-content: center;
  width: 97px;
  height: 97px;
  padding: 0;
  border-radius: 50%;
  background: radial-gradient(circle, #e6e6e6 0 39px, transparent 39.5px),
    conic-gradient(#8fc3dc, #bcb4e4 60deg, #dcaed8 110deg, #e8a8cc 170deg, #c8b0e4 225deg, #96bce0 280deg, #a0d4e0 330deg, #8fc3dc);
  box-shadow: 0 18px 40px rgba(0, 0, 0, 0.18);
}

/* log */
.log {
  flex: none;
  height: 255px;
  border-top: 2px solid #f2f3f3;
}
.log-head {
  display: flex;
  align-items: center;
  height: 57px;
  border-bottom: 2px solid #e4e4e4;
  padding-bottom: 2px;
}
.log-name {
  width: 2036px;
  padding: 0 0 2px 58px;
}
.log-time {
  width: 208px;
  height: 32px;
  line-height: 32px;
  padding-left: 10px;
  font-size: 22px;
  border-left: 2px solid #e8e8e8;
}
.log-rest {
  flex: 1;
  height: 32px;
  border-left: 2px solid #e8e8e8;
}
.log-body {
  height: 196px;
  padding: 9px 9px 0 21px;
  background:
    linear-gradient(#e6e6e6, #e6e6e6) 2036px 0 / 2px 100% no-repeat,
    linear-gradient(#e6e6e6, #e6e6e6) 2244px 0 / 2px 100% no-repeat;
}
.log-row {
  display: flex;
  height: 38px;
  border-radius: 10px;
}
.log-row:nth-child(even) {
  background: rgba(0, 30, 30, 0.047);
}
.log-msg {
  display: flex;
  align-items: center;
  gap: 12px;
  width: 2015px;
  padding-left: 38px;
  word-spacing: 3px;
}
.log-msg span {
  margin: 0 0 4px -1px;
}
.log-dur {
  padding-left: 8px;
  line-height: 34px;
  font-size: 22px;
  color: #333;
}
```
